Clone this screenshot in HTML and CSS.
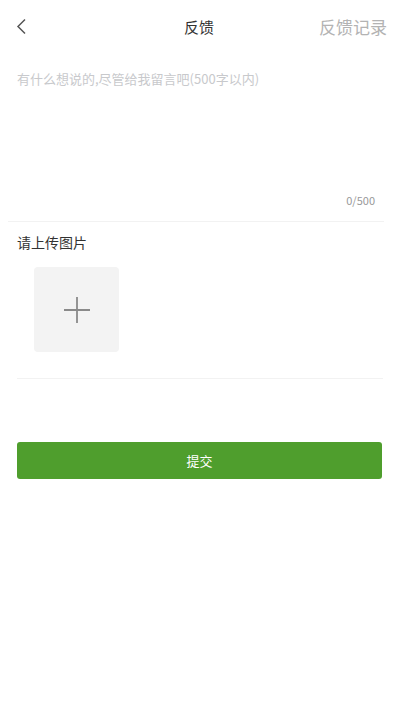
FILE: index.html
```html
<!DOCTYPE html>
<html lang="zh">
<head>
  <meta charset="UTF-8">
  <title>反馈</title>
  <link rel="stylesheet" href="styles.css">
</head>
<body>
  <div class="nav">
    <span class="back">
      <svg width="11" height="17" viewBox="0 0 11 17"><path d="M9 1.5 L2 8.5 L9 15.5" fill="none" stroke="#555" stroke-width="1.5"/></svg>
    </span>
    <span class="title">反馈</span>
    <span class="record">反馈记录</span>
  </div>

  <div class="input-area">
    <div class="placeholder">有什么想说的,尽管给我留言吧(500字以内)</div>
    <div class="count">0/500</div>
  </div>

  <div class="upload">
    <div class="label">请上传图片</div>
    <div class="add-box">
      <svg width="28" height="28" viewBox="0 0 28 28"><path d="M14 1 V27 M1 14 H27" stroke="#8a8a8a" stroke-width="1.8"/></svg>
    </div>
  </div>

  <div class="submit">提交</div>
</body>
</html>
```

FILE: styles.css
```css
body {
  margin: 0;
  background: #fff;
  font-family: "Noto Sans CJK SC", "Noto Sans", sans-serif;
  color: #333;
}
.nav {
  height: 52px;
  display: flex;
  align-items: center;
  justify-content: space-between;
  padding: 0 11px 0 16px;
  position: relative;
}
.back {
  display: flex;
  width: 60px;
}
.title {
  position: absolute;
  left: 0;
  right: 0;
  text-align: center;
  font-size: 15px;
  color: #333;
  pointer-events: none;
}
.record {
  font-size: 17px;
  color: #b3b3b3;
}
.input-area {
  margin: 0 14px 0 8px;
  padding: 17px 0 13px 9px;
  border-bottom: 1px solid #f2f2f2;
}
.placeholder {
  font-size: 13px;
  color: #c8c9cc;
  height: 123px;
}
.count {
  text-align: right;
  font-size: 11px;
  color: #999;
  line-height: 16px;
  padding-right: 9px;
}
.upload {
  margin: 0 15px 0 17px;
  padding: 12px 0 26px;
  border-bottom: 1px solid #f2f2f2;
}
.label {
  font-size: 14px;
  color: #333;
  line-height: 16px;
}
.add-box {
  width: 85px;
  height: 85px;
  margin: 17px 0 0 17px;
  background: #f3f3f3;
  border-radius: 4px;
  display: flex;
  align-items: center;
  justify-content: center;
}
.submit {
  margin: 63px 16px 0 17px;
  height: 37px;
  background: #4f9e2d;
  border-radius: 3px;
  color: #fff;
  font-size: 13px;
  display: flex;
  align-items: center;
  justify-content: center;
}
```
